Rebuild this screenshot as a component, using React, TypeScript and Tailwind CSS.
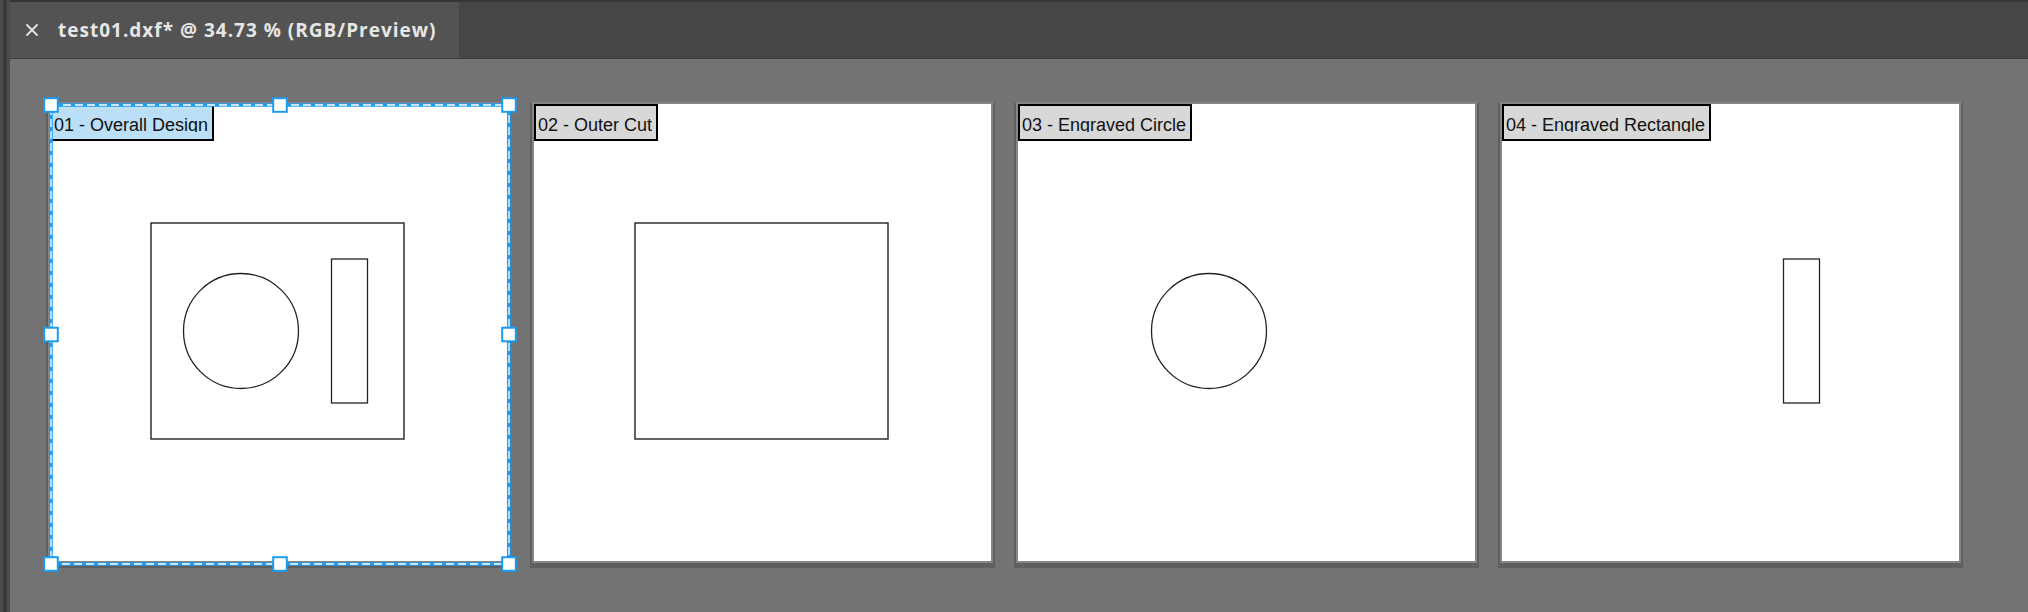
import React from "react";

type Board = {
  label: string;
  selected?: boolean;
  outer?: boolean;
  circle?: boolean;
  bar?: boolean;
};

const boards: Board[] = [
  { label: "01 - Overall Design", selected: true, outer: true, circle: true, bar: true },
  { label: "02 - Outer Cut", outer: true },
  { label: "03 - Engraved Circle", circle: true },
  { label: "04 - Engraved Rectangle", bar: true },
];

const handles = [
  [1, 1],
  [230, 1],
  [459, 1],
  [1, 230.5],
  [459, 230.5],
  [1, 460],
  [230, 460],
  [459, 460],
];

const Selection = () => (
  <svg
    className="absolute -left-[10px] -top-[10px] pointer-events-none"
    width={481}
    height={481}
    viewBox="-10 -10 481 481"
  >
    <rect x={1} y={1} width={458} height={459} fill="none" stroke="#1c9bef" strokeWidth={3.5} />
    <rect
      x={1}
      y={1}
      width={458}
      height={459}
      fill="none"
      stroke="#ffffff"
      strokeWidth={1.3}
      strokeDasharray="8 4"
    />
    {handles.map(([x, y], i) => (
      <rect
        key={`h_${i}`}
        x={x - 6.8}
        y={y - 6.8}
        width={13.6}
        height={13.6}
        fill="#ffffff"
        stroke="#1c9bef"
        strokeWidth={2}
      />
    ))}
  </svg>
);

const Artboard = ({ board }: { board: Board }) => {
  return (
    <div className="relative w-[461px] h-[461px] shrink-0 border-2 border-[#868686] bg-white shadow-[0_3px_0_2px_#5f5f5f]">
      <svg className="absolute left-0 top-0" width={457} height={457}>
        {board.outer && (
          <rect x={101} y={119} width={253} height={216} fill="none" stroke="#222" strokeWidth={1.4} />
        )}
        {board.circle && (
          <circle cx={191} cy={227} r={57.5} fill="none" stroke="#222" strokeWidth={1.3} />
        )}
        {board.bar && (
          <rect x={281.5} y={155} width={36} height={144} fill="none" stroke="#222" strokeWidth={1.3} />
        )}
      </svg>
      <div
        className={`absolute left-0 top-0 h-[37px] border-2 border-black pl-[2px] pr-[4px] ${
          board.selected ? "bg-[#bbdff7]" : "bg-[#d8d8d8]"
        }`}
      >
        <div className="h-[26px] overflow-hidden pt-[9.5px] text-[18px] leading-[18px] whitespace-nowrap text-[#111] font-['Liberation_Sans',Arial,sans-serif]">
          {board.label}
        </div>
      </div>
      {board.selected && <Selection />}
    </div>
  );
};

export default function App() {
  return (
    <div className="flex w-[2028px] h-[612px] overflow-hidden bg-[#737373]">
      <div className="flex w-[10px] shrink-0">
        <div className="w-[3px] bg-[#4a4a4a]" />
        <div className="w-[4px] bg-[#393939]" />
        <div className="w-[3px] bg-[#4b4b4b]" />
      </div>
      <div className="flex flex-1 flex-col">
        <div className="flex h-[59px] shrink-0 border-t-2 border-b border-t-[#363636] border-b-[#3b3b3b] bg-[#464646]">
          <div className="flex w-[450px] items-center gap-[20px] bg-[#535353] pl-[16px] border-r border-[#444]">
            <svg width={12} height={12} viewBox="0 0 12 12">
              <path d="M1 1 L11 11 M11 1 L1 11" stroke="#e2e2e2" strokeWidth={1.8} strokeLinecap="round" />
            </svg>
            <span className="text-[19px] font-bold tracking-[1px] text-[#e6e6e6] whitespace-nowrap font-['Open_Sans',sans-serif]">
              test01.dxf* @ 34.73 % (RGB/Preview)
            </span>
          </div>
        </div>
        <div className="flex flex-1 gap-[23px] pl-[38px] pt-[43px]">
          {boards.map((board, index) => (
            <Artboard key={`board_${index}`} board={board} />
          ))}
        </div>
      </div>
    </div>
  );
}
